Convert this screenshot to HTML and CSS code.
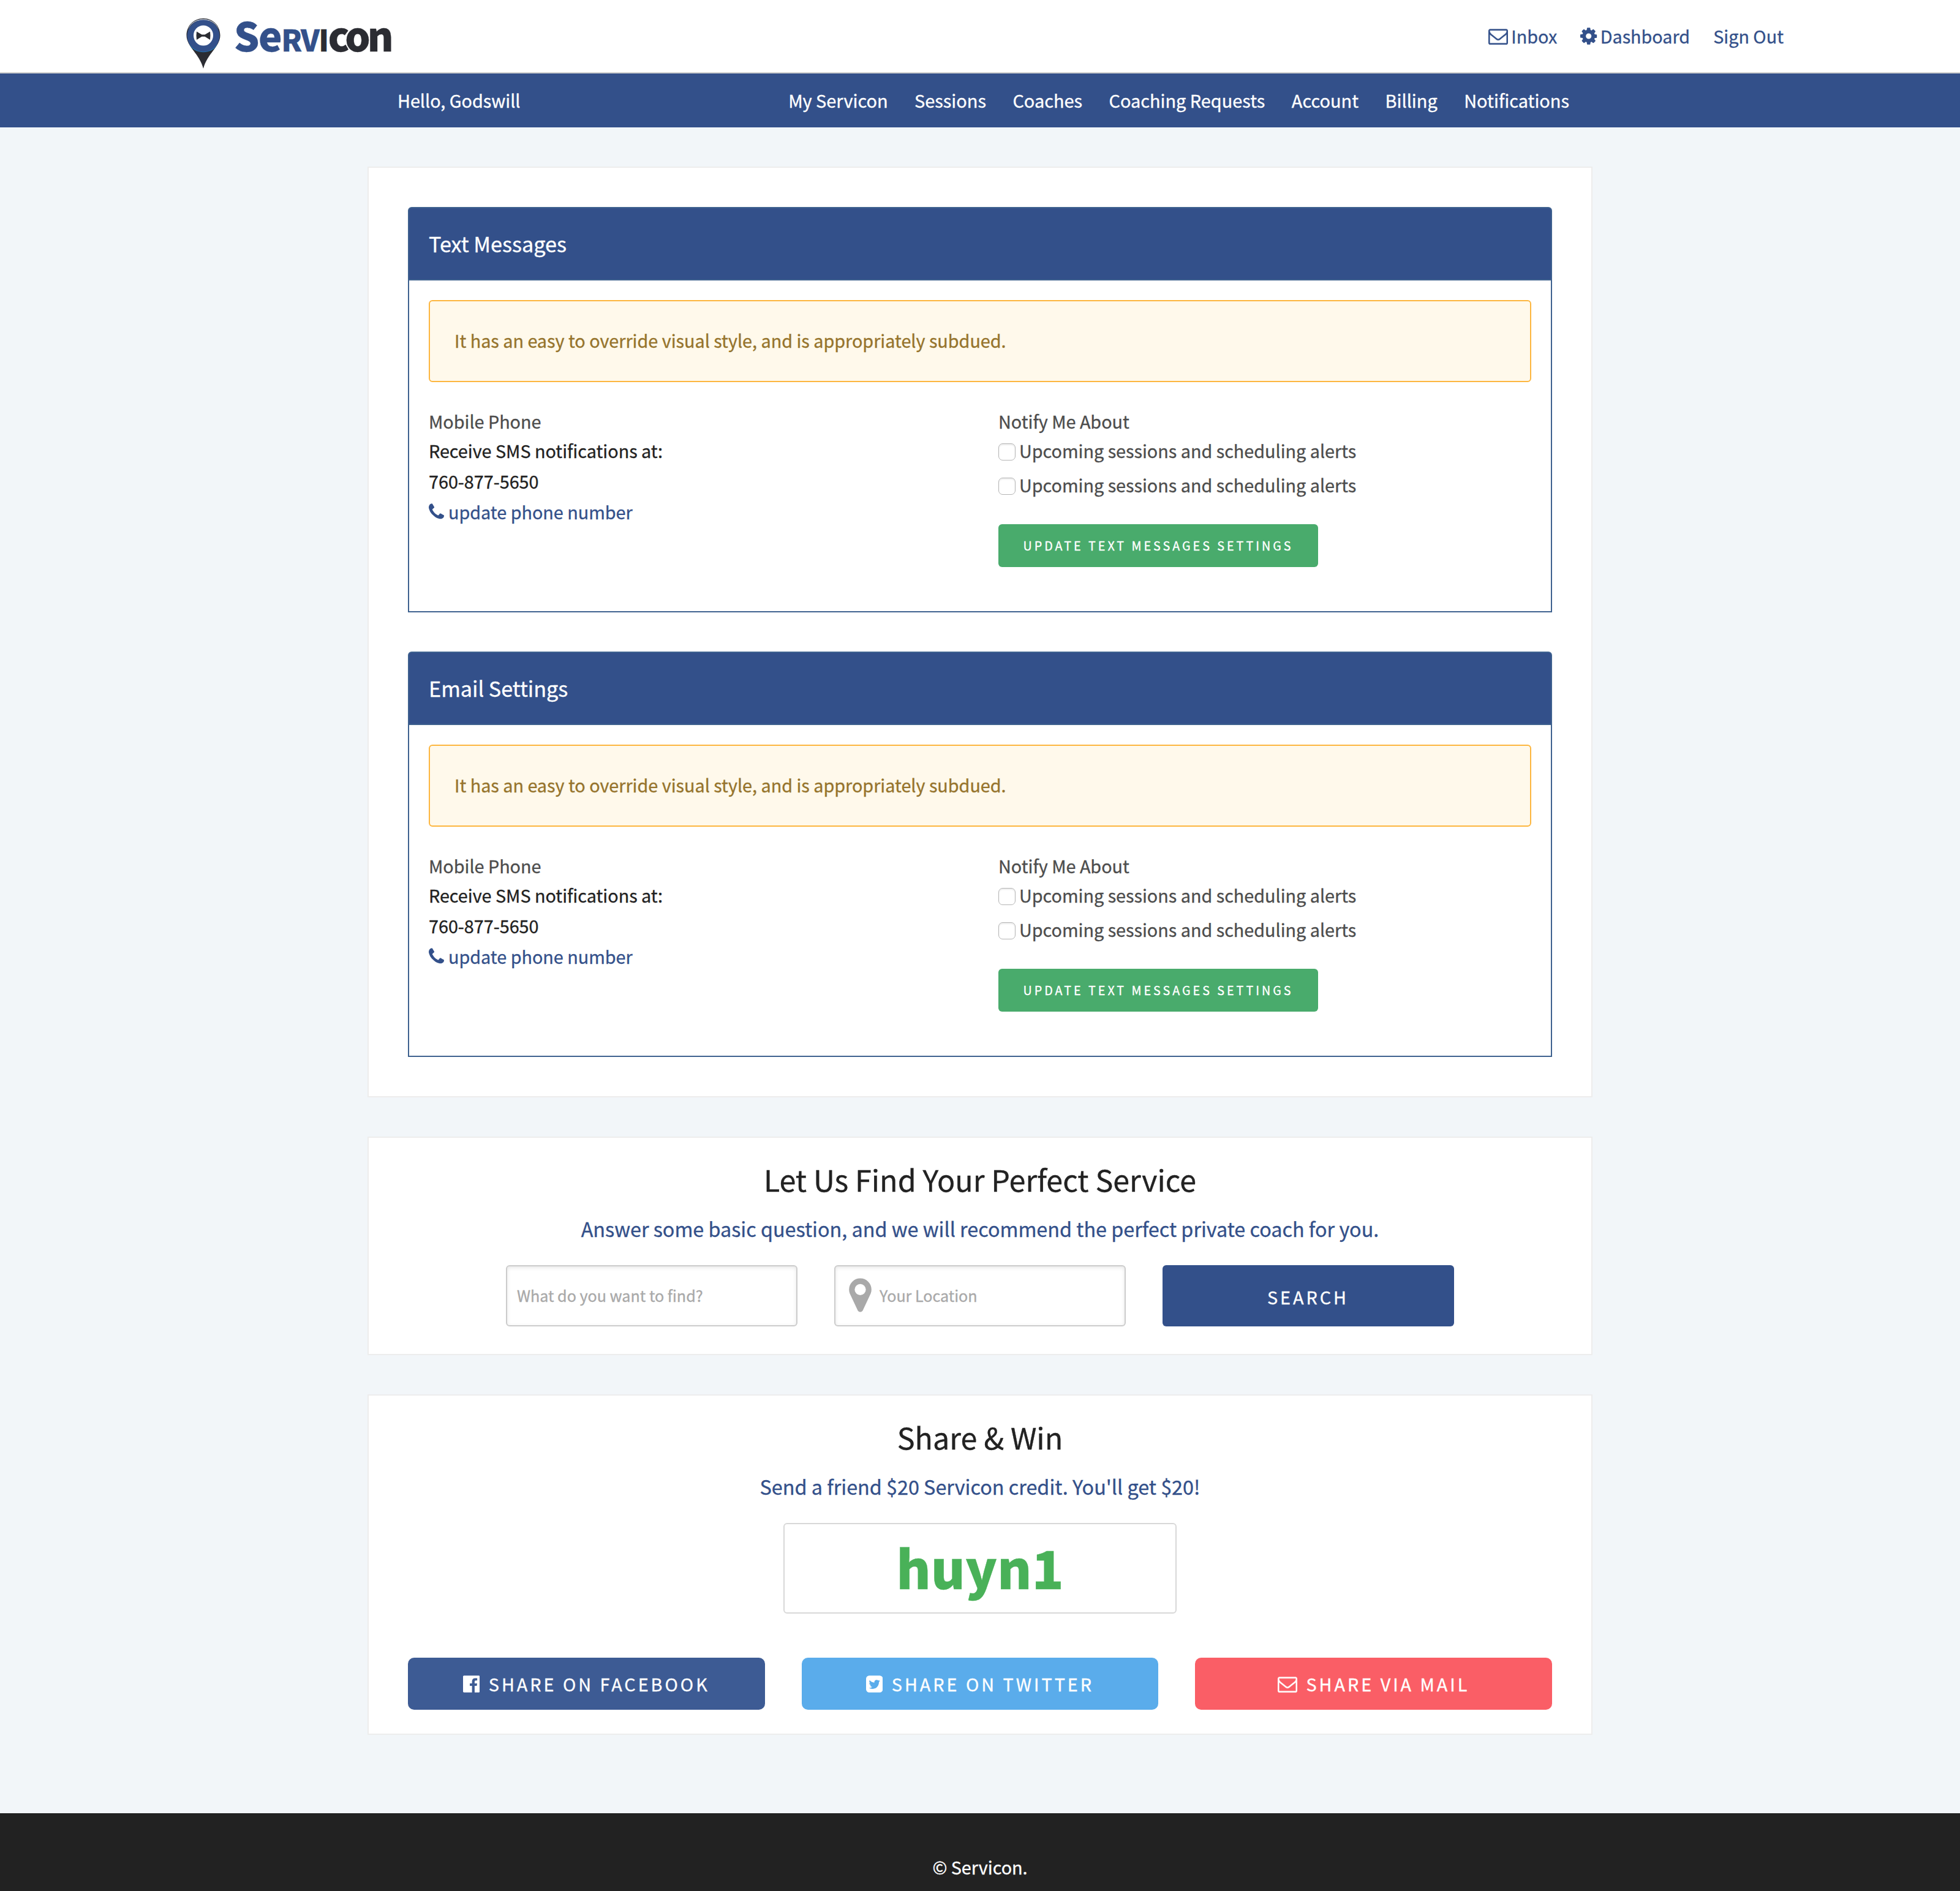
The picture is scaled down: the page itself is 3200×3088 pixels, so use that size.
FILE: index.html
```html
<!DOCTYPE html>
<html lang="en">
<head>
<meta charset="utf-8">
<title>Servicon - Notifications</title>
<link rel="stylesheet" href="styles.css">
</head>
<body>
<svg class="sprite" aria-hidden="true">
  <symbol id="envelope" viewBox="0 0 1792 1792"><path d="M1664 1504v-768q-32 36-69 66-268 206-426 338-51 43-83 67t-86.5 48.5-102.5 24.5h-2q-48 0-102.5-24.5t-86.5-48.5-83-67q-158-132-426-338-37-30-69-66v768q0 13 9.5 22.5t22.5 9.5h1472q13 0 22.5-9.5t9.5-22.5zm0-1051v-24.5l-.5-13-3-12.5-5.5-9-9-7.5-14-2.500h-1472q-13 0-22.500 9.500t-9.500 22.500q0 168 147 284 193 152 401 317 6 5 35 29.500t46 37.500 44.500 31.500 50.500 27.500 43 9h2q20 0 43-9t50.500-27.500 44.500-31.500 46-37.500 35-29.500q208-165 401-317 54-43 100.500-115.500t46.500-131.500zm128-37v1088q0 66-47 113t-113 47h-1472q-66 0-113-47t-47-113v-1088q0-66 47-113t113-47h1472q66 0 113 47t47 113z"/></symbol>
  <symbol id="cog" viewBox="128 0 1536 1792"><path d="M1152 896q0-106-75-181t-181-75-181 75-75 181 75 181 181 75 181-75 75-181zm512-109v222q0 12-8 23t-20 13l-185 28q-19 54-39 91 35 50 107 138 10 12 10 25t-9 23q-27 37-99 108t-94 71q-12 0-26-9l-138-108q-44 23-91 38-16 136-29 186-7 28-36 28h-222q-14 0-24.500-8.500t-11.500-21.500l-28-184q-49-16-90-37l-141 107q-10 9-25 9-14 0-25-11-126-114-165-168-7-10-7-23 0-12 8-23 15-21 51-66.500t54-70.500q-27-50-41-99l-183-27q-13-2-21-12.500t-8-23.500v-222q0-12 8-23t19-13l186-28q14-46 39-92-40-57-107-138-10-12-10-24 0-10 9-23 26-36 98.500-107.500t94.500-71.500q13 0 26 10l138 107q44-23 91-38 16-136 29-186 7-28 36-28h222q14 0 24.500 8.500t11.500 21.500l28 184q49 16 90 37l142-107q9-9 24-9 13 0 25 10 129 119 165 170 7 8 7 22 0 12-8 23-15 21-51 66.500t-54 70.500q26 50 41 98l183 28q13 2 21 12.500t8 23.500z"/></symbol>
  <symbol id="phone" viewBox="192 0 1408 1792"><path d="M1600 1240q0 27-10 70.500t-21 68.500q-21 50-122 106-94 51-186 51-27 0-53-3.500t-57.500-12.500-47-14.500-55.500-20.500-49-18q-98-35-175-83-127-79-264-216t-216-264q-48-77-83-175-3-9-18-49t-20.500-55.500-14.500-47-12.500-57.500-3.500-53q0-92 51-186 56-101 106-122 25-11 68.500-21t70.500-10q14 0 21 3 18 6 53 76 11 19 30 54t35 63.500 31 53.500q3 4 17.500 25t21.500 35.500 7 28.500q0 20-28.500 50t-62 55-62 53-28.500 46q0 9 5 22.500t8.500 20.500 14 24 11.500 19q76 137 174 235t235 174q2 1 19 11.500t24 14 20.500 8.500 22.500 5q18 0 46-28.500t53-62 55-62 50-28.500q14 0 28.500 7t35.500 21.500 25 17.500q25 15 53.500 31t63.500 35 54 30q70 35 76 53 3 7 3 21z"/></symbol>
  <symbol id="marker" viewBox="384 0 1024 1792"><path d="M1152 640q0-106-75-181t-181-75-181 75-75 181 75 181 181 75 181-75 75-181zm256 0q0 109-33 179l-364 774q-16 33-47.500 52t-67.500 19-67.500-19-46.500-52l-365-774q-33-70-33-179 0-212 150-362t362-150 362 150 150 362z"/></symbol>
  <symbol id="facebook" viewBox="128 0 1536 1792"><path d="M1579 128q35 0 60 25t25 60v1366q0 35-25 60t-60 25h-391v-595h199l30-232h-229v-148q0-56 23.500-84t91.500-28l122-1v-207q-63-9-178-9-136 0-217.500 80t-81.500 226v171h-200v232h200v595h-735q-35 0-60-25t-25-60v-1366q0-35 25-60t60-25h1366z"/></symbol>
  <symbol id="twitter" viewBox="128 0 1536 1792"><path d="M1408 610q-56 25-121 34 68-40 93-117-65 38-134 51-61-66-153-66-87 0-148.500 61.500t-61.500 148.500q0 29 5 48-129-7-242-65t-192-155q-29 50-29 106 0 114 91 175-47-1-100-26v2q0 75 50 133.500t123 72.500q-29 8-51 8-13 0-39-4 21 63 74.500 104t121.500 42q-116 90-261 90-26 0-50-3 148 94 322 94 112 0 210-35.500t168-95 120.500-137 75-162 24.500-168.500q0-18-1-27 63-45 105-109zm256-194v960q0 119-84.500 203.500t-203.500 84.500h-960q-119 0-203.500-84.500t-84.500-203.500v-960q0-119 84.500-203.500t203.500-84.500h960q119 0 203.500 84.500t84.500 203.500z"/></symbol>
</svg>

<header class="topbar">
  <a class="logo">
    <svg class="logo-pin" viewBox="0 0 56 82">
      <path fill="#2b2c32" d="M28 0C12 0 0.500 12 0.500 28C0.500 46 22 58 28 82C34 58 55.500 46 55.500 28C55.500 12 44 0 28 0Z"/>
      <path fill="#b9c3d6" d="M28 1.200C15 1.200 6 8 3 18C9 6 18 3 28 3C38 3 47 6 53 18C50 8 41 1.200 28 1.200Z"/>
      <path fill="#1f7ab8" d="M5 41C11 60 45 60 51 41L46 40H10Z"/>
      <ellipse cx="28" cy="28.500" rx="26.500" ry="26" fill="#33508a"/>
      <ellipse cx="28" cy="28" rx="16" ry="16.500" fill="#fff"/>
      <path fill="#2b2c32" d="M17 21.500L25.500 26.500H30.500L39 21.500Q40 28 39 35L30.500 29.800H25.500L17 35Q16 28 17 21.500Z"/>
    </svg>
    <span class="logo-text">Se<span class="cap">rv</span><span class="dark"><span class="cap">i</span>con</span></span>
  </a>
  <nav class="top-links">
    <a><svg class="icon w-full"><use href="#envelope"/></svg>Inbox</a>
    <a><svg class="icon"><use href="#cog"/></svg>Dashboard</a>
    <a>Sign Out</a>
  </nav>
</header>

<div class="navbar">
  <span>Hello, Godswill</span>
  <nav class="menu">
    <a>My Servicon</a><a>Sessions</a><a>Coaches</a><a>Coaching Requests</a><a>Account</a><a>Billing</a><a>Notifications</a>
  </nav>
</div>

<main class="page">
  <section class="card settings">
    <article class="panel">
      <h5 class="panel-title">Text Messages</h5>
      <div class="panel-body">
        <div class="alert">It has an easy to override visual style, and is appropriately subdued.</div>
        <div class="columns">
          <div class="column">
            <div class="label">Mobile Phone</div>
            <p>Receive SMS notifications at:</p>
            <p>760-877-5650</p>
            <p><a class="link"><svg class="icon phone"><use href="#phone"/></svg>update phone number</a></p>
          </div>
          <div class="column">
            <div class="label">Notify Me About</div>
            <label class="check"><input type="checkbox">Upcoming sessions and scheduling alerts</label>
            <label class="check"><input type="checkbox">Upcoming sessions and scheduling alerts</label>
            <button class="update">Update Text Messages Settings</button>
          </div>
        </div>
      </div>
    </article>
    <article class="panel">
      <h5 class="panel-title">Email Settings</h5>
      <div class="panel-body">
        <div class="alert">It has an easy to override visual style, and is appropriately subdued.</div>
        <div class="columns">
          <div class="column">
            <div class="label">Mobile Phone</div>
            <p>Receive SMS notifications at:</p>
            <p>760-877-5650</p>
            <p><a class="link"><svg class="icon phone"><use href="#phone"/></svg>update phone number</a></p>
          </div>
          <div class="column">
            <div class="label">Notify Me About</div>
            <label class="check"><input type="checkbox">Upcoming sessions and scheduling alerts</label>
            <label class="check"><input type="checkbox">Upcoming sessions and scheduling alerts</label>
            <button class="update">Update Text Messages Settings</button>
          </div>
        </div>
      </div>
    </article>
  </section>

  <section class="card find">
    <h3>Let Us Find Your Perfect Service</h3>
    <p class="sub">Answer some basic question, and we will recommend the perfect private coach for you.</p>
    <form class="search">
      <div class="field">What do you want to find?</div>
      <div class="field location"><svg class="marker"><use href="#marker"/></svg>Your Location</div>
      <button type="button" class="search-btn">Search</button>
    </form>
  </section>

  <section class="card share">
    <h3>Share &amp; Win</h3>
    <p class="sub">Send a friend $20 Servicon credit. You'll get $20!</p>
    <div class="code">huyn1</div>
    <div class="share-buttons">
      <a class="share-btn facebook"><svg class="icon"><use href="#facebook"/></svg>Share on Facebook</a>
      <a class="share-btn twitter"><svg class="icon"><use href="#twitter"/></svg>Share on Twitter</a>
      <a class="share-btn mail"><svg class="icon w-full"><use href="#envelope"/></svg>Share via Mail</a>
    </div>
  </section>
</main>

<footer class="footer">© Servicon.</footer>
</body>
</html>
```
FILE: styles.css
```css
* { box-sizing: border-box; }

body {
  margin: 0;
  min-height: 3088px;
  display: flex;
  flex-direction: column;
  background: #f2f6f9;
  color: #222;
  font-family: "Noto Sans CJK SC", "Noto Sans", sans-serif;
  font-size: 28.75px;
  line-height: 48px;
  -webkit-text-stroke: 0.35px currentColor;
}

h3, h5, p { margin: 0; font-weight: 400; }

button {
  border: 0;
  font-family: inherit;
  color: #fff;
  text-transform: uppercase;
  -webkit-text-stroke: 0.35px currentColor;
}

.sprite { position: absolute; width: 0; height: 0; }

.icon { width: 27.4px; height: 32px; fill: currentColor; flex: none; }
.icon.w-full { width: 32px; stroke: currentColor; stroke-width: 24px; overflow: visible; }

/* Header */
.topbar {
  height: 120px;
  padding: 0 288px 0 304px;
  display: flex;
  align-items: center;
  justify-content: space-between;
  background: #fff;
  border-bottom: 2px solid #ccc;
}

.logo { display: flex; align-items: center; gap: 22px; }
.logo-pin { width: 56px; height: 82px; margin-top: 23px; }
.logo-text {
  font-size: 65px;
  font-weight: 900;
  line-height: 118px;
  color: #33508a;
  letter-spacing: -1.5px;
}
.logo-text .cap { font-size: 48px; text-transform: uppercase; }
.logo-text .dark { color: #2b2c32; letter-spacing: -5px; }
.logo-text .dark .cap { letter-spacing: -1.5px; }

.top-links { display: flex; gap: 38px; color: #33508a; }
.top-links a { display: flex; align-items: center; gap: 5px; }

.navbar {
  height: 88px;
  padding: 0 638px 0 649px;
  display: flex;
  align-items: center;
  justify-content: space-between;
  background: #33508a;
  color: #fff;
}
.menu { display: flex; gap: 43.5px; padding-bottom: 2px; font-size: 28.9px; }

/* Cards */
.page {
  width: 2000px;
  margin: 64px auto 128px;
  display: flex;
  flex-direction: column;
  gap: 64px;
}
.card { background: #fff; border: 2px solid #ededed; }

.settings { padding: 64px; display: flex; flex-direction: column; gap: 64px; }

.panel { height: 662px; display: flex; flex-direction: column; }
.panel-title {
  height: 120px;
  padding: 0 32px;
  border: 2px solid #3f628f;
  border-radius: 6px 6px 0 0;
  background: #33508a;
  color: #fff;
  font-size: 34.2px;
  line-height: 114px;
}
.panel-body {
  flex: 1;
  padding: 32px;
  border: 2px solid #3f628f;
  border-top: 0;
}
.alert {
  height: 134px;
  padding: 0 40px;
  border: 2px solid #fdb63f;
  border-radius: 6px;
  background: #fff9eb;
  color: #96742c;
  line-height: 127px;
}
.columns { display: grid; grid-template-columns: 1fr 1fr; column-gap: 60px; margin-top: 40px; }
.label { color: #4d4d4d; line-height: 47px; }
.column p { line-height: 49.6px; }
.link { display: flex; align-items: center; gap: 7px; padding-top: 1px; color: #33508a; }
.phone { width: 25px; }

.check { display: flex; align-items: center; gap: 6px; padding-top: 1px; margin-bottom: 7px; color: #4d4d4d; }
.check input {
  appearance: none;
  width: 28px;
  height: 28px;
  margin: 3px 0 0;
  border: 1.5px solid #b5b5b5;
  border-radius: 7px;
  background: #fff;
  box-shadow: inset 0 2px 2px #ececec;
}

.update {
  display: block;
  width: 522px;
  height: 70px;
  margin-top: 40px;
  padding: 0 0 2px;
  border-radius: 6px;
  background: #49ab6c;
  font-size: 19.7px;
  letter-spacing: 4px;
}

/* Find and share cards */
.find, .share { display: flex; flex-direction: column; align-items: center; padding: 33px 64px 0; }
.find { height: 357px; }
.share { height: 556px; }
h3 { font-size: 48.4px; line-height: 68px; }
.sub { margin: 21px 0 34px; color: #33508a; font-size: 32.34px; line-height: 52px; }

.search { display: grid; grid-template-columns: repeat(3, 476px); gap: 60px; }
.field {
  height: 100px;
  padding: 0 16px 2px;
  display: flex;
  align-items: center;
  border: 2px solid #ccc;
  border-radius: 6px;
  box-shadow: inset 0 2px 6px rgba(0, 0, 0, .1);
  color: #a9a9a9;
  font-size: 25.1px;
}
.location { padding-left: 22px; gap: 13px; }
.marker { width: 37px; height: 64px; fill: #a9a9a9; }
.search-btn {
  border-radius: 6px;
  background: #33508a;
  font-size: 28.75px;
  letter-spacing: 4px;
  padding: 3px 1px 0 0;
}

.code {
  width: 642px;
  height: 148px;
  border: 2px solid #d8d8d8;
  border-radius: 6px;
  color: #49b158;
  font-size: 86px;
  font-weight: 900;
  line-height: 138px;
  text-align: center;
}

.share-buttons { align-self: stretch; display: grid; grid-template-columns: repeat(3, 1fr); gap: 60px; margin-top: 72px; }
.share-btn {
  height: 85px;
  display: flex;
  align-items: center;
  justify-content: center;
  gap: 14.5px;
  border-radius: 10px;
  color: #fff;
  letter-spacing: 4px;
  text-transform: uppercase;
}
.facebook { background: #3d5b94; }
.twitter { background: #5aaceb; }
.mail { background: #fa5e66; }

.footer {
  flex: 1;
  padding-top: 64px;
  background: #222;
  color: #fff;
  text-align: center;
}
```
